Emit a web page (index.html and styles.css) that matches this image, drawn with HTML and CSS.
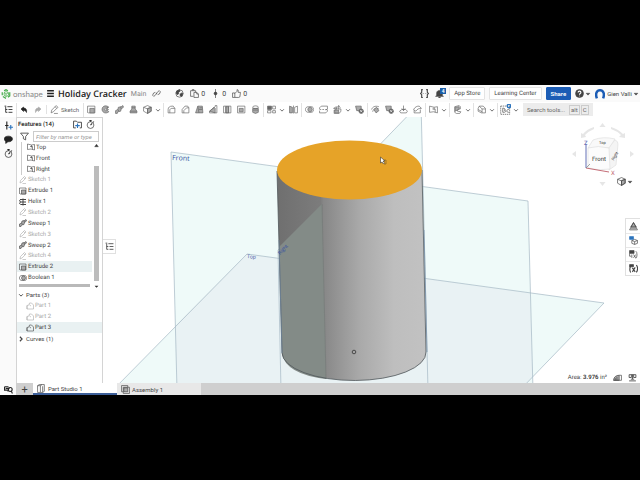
FILE: index.html
```html
<!DOCTYPE html>
<html lang="en">
<head>
  <meta charset="UTF-8">
  <meta name="viewport" content="width=device-width, initial-scale=1.0">
  <title>Holiday Cracker | Part Studio 1</title>
  <link rel="stylesheet" href="styles.css">
</head>
<body>
  <svg class="sprite" aria-hidden="true">
    <symbol id="i-logo" viewBox="0 0 16 16"><path d="M5 3l3-2 3 2M14 5v6l-3 2M8 15l-5-3M2 10V5" stroke-width="2"/><path d="M5 6l3-2 4 2v4l-4 2-3-2zM8 8v4M5 6l3 2 4-2"/></symbol>
    <symbol id="i-menu" viewBox="0 0 16 16"><path d="M2 3h12M2 8h12M2 13h12" stroke-width="2.500"/></symbol>
    <symbol id="i-link" viewBox="0 0 16 16"><path d="m7 9 3-4 3-2 2 2-2 4-3 1M9 7l-3 4-3 2-2-2 2-4 3-1"/></symbol>
    <symbol id="i-globe" viewBox="0 0 16 16"><circle cx="8" cy="8" r="6.500"/><path class="solid" d="M3 4l5-3 1 3-3 2 1 2-3 2-2-3zM9 9l3-2 2 1-2 5-3-1z"/></symbol>
    <symbol id="i-copy" viewBox="0 0 16 16"><path d="M6 13H1V3h9v3M4 3V1h3v2M7 6h5l3 3v6H7zM12 6v3h3"/></symbol>
    <symbol id="i-pin" viewBox="0 0 16 16"><path d="M8 0v16"/><circle class="solid" cx="8" cy="8" r="2.500"/></symbol>
    <symbol id="i-thumb" viewBox="0 0 16 16"><path d="M1 7h4v8H1zM5 8l4-4V1l2 1v4h4l-1 8-2 1H5"/></symbol>
    <symbol id="i-braces" viewBox="0 0 16 16"><path d="M5 1H3v5L1 8l2 2v5h2M11 1h2v5l2 2-2 2v5h-2M5 8h1M10 8h1" stroke-width="2"/></symbol>
    <symbol id="i-bell" viewBox="0 0 16 16"><path class="solid" d="M3 12V7c0-6 10-6 10 0v5l2 1H1zM6 14h4l-2 2z"/></symbol>
    <symbol id="i-help" viewBox="0 0 16 16"><circle class="solid" cx="8" cy="8" r="7"/><path d="M5.500 6c0-3 5-3 5 0 0 2-2.500 2-2.500 4M8 12v1" stroke="#fff" stroke-width="2"/></symbol>
    <symbol id="i-user" viewBox="0 0 16 16"><path d="M3 15C0 7 3 2 8 2s8 5 5 13" stroke-width="4"/></symbol>
    <symbol id="i-down" viewBox="0 0 16 16"><path d="m3 6 5 5 5-5" stroke-width="2.500"/></symbol>
    <symbol id="i-right" viewBox="0 0 16 16"><path d="m5 2 6 6-6 6" stroke-width="3"/></symbol>
    <symbol id="i-caret" viewBox="0 0 16 16"><path class="solid" d="M3 6h10l-5 5z"/></symbol>
    <symbol id="i-caret-up" viewBox="0 0 16 16"><path class="solid" d="M2 12h12L8 4z"/></symbol>
    <symbol id="i-tree" viewBox="0 0 16 16"><path d="M1 2h3M6 3h9M3 3v10h3M8 8h7M8 13h7M3 8h3" stroke-width="1.500"/></symbol>
    <symbol id="i-undo" viewBox="0 0 16 16"><path class="solid" d="m2 6 5-4v2c5 0 7 3 6 9-1-3-3-4-6-4v2z"/></symbol>
    <symbol id="i-redo" viewBox="0 0 16 16"><path class="solid" d="m14 6-5-4v2C4 4 2 7 3 13c1-3 3-4 6-4v2z"/></symbol>
    <symbol id="i-pencil" viewBox="0 0 16 16"><path d="m2 14 1-5 8-8 3 3-8 8zM9 3l3 3M7 15h7"/></symbol>
    <symbol id="i-extrude" viewBox="0 0 16 16"><path d="M1 14V2h13v3M2 14h12V5"/><path class="tone" d="M5 6h8v8H5z"/></symbol>
    <symbol id="i-revolve" viewBox="0 0 16 16"><path class="tone" d="M13 3C6-1 1 4 2 9s7 7 12 3l-3-3c-2 2-5 1-5-1s3-3 5-1z"/><path d="M8 8h6M10 5l4-1"/></symbol>
    <symbol id="i-sweep" viewBox="0 0 16 16"><path class="tone" d="M1 10l4-2 1-4 5-1 3-2 1 3-4 3-1 4-5 1-1 3H1z"/><path d="M5 8l2 3M10 3l1 4"/></symbol>
    <symbol id="i-loft" viewBox="0 0 16 16"><path class="tone" d="M5 2h6v5l3 4v3H2v-3l3-4z"/><path d="M5 5h6M2 11h12"/></symbol>
    <symbol id="i-box" viewBox="0 0 16 16"><path class="tone" d="m8 6 6-2v7l-6 4z"/><path d="m1 4 7-3 7 3v7l-7 4-7-4zM1 4l7 3 7-3M8 7v8"/></symbol>
    <symbol id="i-fillet" viewBox="0 0 16 16"><path d="M2 14V8c0-4 3-6 7-6h2l3 4v8zM5 14V9c0-2 2-3 4-3h5"/></symbol>
    <symbol id="i-chamfer" viewBox="0 0 16 16"><path d="M2 14V8l5-6h5l2 3v9zM5 14v-4l5-5h4"/></symbol>
    <symbol id="i-draft" viewBox="0 0 16 16"><path class="tone" d="M5 2h8l1 12H1z"/><path d="m5 2 2 12M8 5h5M7 8h6"/></symbol>
    <symbol id="i-rib" viewBox="0 0 16 16"><path class="tone" d="m1 11 8-7 2 2v8z"/><path d="M11 1h3v13H1v-3l10-8z"/></symbol>
    <symbol id="i-thicken" viewBox="0 0 16 16"><path class="tone" d="M5 3h5v11H5z"/><path d="M1 2h13v12H1zM5 2v12M10 2v12"/></symbol>
    <symbol id="i-shell" viewBox="0 0 16 16"><path d="M1 2h13v12H1z"/><path class="tone" d="M4 6h7v6H4z"/></symbol>
    <symbol id="i-hole" viewBox="0 0 16 16"><path class="tone" d="M3 6h10v7l-5 2-5-2z"/><ellipse cx="8" cy="4" rx="5" ry="2.500"/><path d="M3 9h10"/></symbol>
    <symbol id="i-pattern" viewBox="0 0 16 16"><path class="solid" d="M1 2h7v6H1z"/><path d="M10 2h5v5h-5zM1 10h6v4H1zM10 10h5v4h-5z"/></symbol>
    <symbol id="i-mirror" viewBox="0 0 16 16"><path d="M8 1v14M10 4l5-2v12h-5z"/><path class="tone" d="M1 2l5 2v10H1z"/></symbol>
    <symbol id="i-boolean" viewBox="0 0 16 16"><path d="M6 3h5c6 0 6 10 0 10H6C-1 13-1 3 6 3z"/><circle class="tone" cx="9" cy="8" r="4"/></symbol>
    <symbol id="i-split" viewBox="0 0 16 16"><path d="M1 7V5l3-3h11v5l-3 2M1 10v4h11l3-3V9M1 8h3M6 8h3M11 8h4"/></symbol>
    <symbol id="i-transform" viewBox="0 0 16 16"><path d="M1 6l5-3v5l-4 1v6h9l3-4V7h-4zM7 5l3-4 3 4M10 1v7"/><path class="tone" d="M3 9h7v5H3z"/></symbol>
    <symbol id="i-delete" viewBox="0 0 16 16"><path class="tone" d="M1 2h10v8H3z"/><circle class="solid" cx="11" cy="11" r="4"/><path d="m9 9 4 4M13 9l-4 4" stroke="#fff"/></symbol>
    <symbol id="i-moveface" viewBox="0 0 16 16"><path d="M1 8c2-5 6-7 13-5M3 12c1-5 5-7 11-5"/><path class="tone" d="m5 8 5-4 4 6-5 4z"/></symbol>
    <symbol id="i-replace" viewBox="0 0 16 16"><path d="M1 11l4-3h7l3 3-2 3H3zM8 1v9M5 6l3 4 3-4"/></symbol>
    <symbol id="i-offset" viewBox="0 0 16 16"><path d="M1 8c3-5 6-6 10-6l4 4c-5 0-7 1-10 5zM2 9v5h11V8"/></symbol>
    <symbol id="i-plane" viewBox="0 0 16 16"><path d="M1 2l8 2 6-1v11l-7-2-7 1zM9 4v5M6 7h5v6"/></symbol>
    <symbol id="i-helix" viewBox="0 0 16 16"><path d="M2 3h12M4 3c-4 1-4 4 0 5h10M4 8c-4 1-4 4 0 5h10M8 1v14" stroke-width="2"/></symbol>
    <symbol id="i-sheet" viewBox="0 0 16 16"><path d="M3 3l8-2 2 2v4l-5 1v3l6 1-2 3H6l-3-2z"/><path class="tone" d="M4 4l7-1v4L4 11z"/></symbol>
    <symbol id="i-frame" viewBox="0 0 16 16"><path d="M4 2h7l4 4v8H8L2 11V6zM4 2l5 5h6M9 7v7M2 8l7 4"/></symbol>
    <symbol id="i-bc" viewBox="0 0 16 16"><path d="M1 3h13v12H1z" stroke-dasharray="2 1"/><path d="M4 6v6h2c3 0 3-3 0-3 2 0 2-3-2-3M13 8c-4-1-4 5 0 4"/><circle cx="13" cy="3" r="2.500" stroke="#2c74bd" stroke-width="2"/></symbol>
    <symbol id="i-insert" viewBox="0 0 16 16"><path d="M5 1v14M2 8h6" stroke-width="2"/><path d="M8 11h8M12 7v8" stroke="#2c74bd" stroke-width="2"/></symbol>
    <symbol id="i-chat" viewBox="0 0 16 16"><path class="solid" d="M8 2c10 0 9 11-1 10l-4 3v-4C-2 8 0 2 8 2z"/></symbol>
    <symbol id="i-clock" viewBox="0 0 16 16"><circle cx="8" cy="9" r="6"/><path d="M6 1h4M8 1v2M8 9l3-3M13 3l1 1" stroke-width="2"/></symbol>
    <symbol id="i-folder" viewBox="0 0 16 16"><path d="M5 14H1V2h5l2 2h7v10h-3" stroke-width="1.500"/><path d="M8 6v8M4 10h8" stroke="#2c74bd" stroke-width="2"/></symbol>
    <symbol id="i-filter" viewBox="0 0 16 16"><path d="M1 2h14L10 8v6l-4-2V8z" stroke-width="1.500"/></symbol>
    <symbol id="i-part" viewBox="0 0 16 16"><path d="M2 7l4-1 1-4h4l4 4v8H2zM2 7v7M7 6l3 2"/></symbol>
    <symbol id="i-studio" viewBox="0 0 16 16"><path d="M1 3h5v12H1zM6 3l3-2h4v12l-3 2H6M10 4v11M1 3l3-2h5"/></symbol>
    <symbol id="i-assembly" viewBox="0 0 16 16"><path class="tone" d="M5 5h7v7H5z"/><path d="M1 1h11v3M1 1v11h3M4 4h11v11H4z"/></symbol>
    <symbol id="i-search" viewBox="0 0 16 16"><path d="M1 3h7M1 3v6h5" stroke-width="2"/><circle cx="11" cy="8" r="3.500" stroke-width="2"/><path d="m13 11 2 4M3 6h6l-3 5" stroke-width="2"/></symbol>
    <symbol id="i-appearance" viewBox="0 0 16 16"><path class="tone" d="M8 1l5 8H3z"/><path d="M8 1l7 13H1zM4 9h8M3 12h10"/></symbol>
    <symbol id="i-config" viewBox="0 0 16 16"><path d="m5 8 5-2 5 2v5l-5 2-5-2zM5 8l5 2 5-2M10 10v5"/><path d="M1 1h7v5H1z" fill="#2c74bd" stroke="#2c74bd"/></symbol>
    <symbol id="i-table" viewBox="0 0 16 16"><path class="solid" d="M1 1h8v5H1z"/><path d="M1 6v5h3M5 8v6M8 8l4 6M12 8l-4 6M12 2c3 1 3 12 0 13"/></symbol>
    <symbol id="i-variable" viewBox="0 0 16 16"><path class="solid" d="M1 1h7v4H1z"/><path d="M3 4c-2 2-2 8 0 11M13 2c3 3 3 9 0 13M6 7l5 7M11 6l-5 8" stroke-width="2"/></symbol>
    <symbol id="i-measure" viewBox="0 0 16 16"><path class="tone" d="M1 13c0-6 5-9 10-9v9z"/><path d="M11 4h4v9H1M4 13V9M7 13V7"/></symbol>
    <symbol id="i-scale" viewBox="0 0 16 16"><path d="M2 14h12M5 11h6M8 3v8M2 3h12M2 3v5h4V3M10 3v5h4V3" stroke-width="1.500"/></symbol>
  </svg>

  <div class="stage">
    <div class="app">
      <header class="topbar">
        <a class="brand" href="#"><svg class="icon logo"><use href="#i-logo"/></svg>onshape</a>
        <button class="tool dark" aria-label="Menu"><svg class="icon"><use href="#i-menu"/></svg></button>
        <h1 class="title">Holiday Cracker</h1>
        <span class="branch">Main</span>
        <button class="tool" aria-label="Link"><svg class="icon"><use href="#i-link"/></svg></button>
        <div class="stats">
          <button class="stat" aria-label="Public"><svg class="icon"><use href="#i-globe"/></svg></button>
          <button class="stat"><svg class="icon"><use href="#i-copy"/></svg>0</button>
          <button class="stat"><svg class="icon"><use href="#i-pin"/></svg>0</button>
          <button class="stat"><svg class="icon"><use href="#i-thumb"/></svg>0</button>
        </div>
        <div class="account">
          <button class="tool" aria-label="Code"><svg class="icon"><use href="#i-braces"/></svg></button>
          <button class="tool bell" aria-label="Notifications"><svg class="icon"><use href="#i-bell"/></svg><span class="badge">4</span></button>
          <a class="btn" href="#">App Store</a>
          <a class="btn" href="#">Learning Center</a>
          <button class="btn share">Share</button>
          <button class="help" aria-label="Help"><svg class="icon"><use href="#i-help"/></svg><svg class="arrow"><use href="#i-caret"/></svg></button>
          <button class="user"><svg class="icon avatar"><use href="#i-user"/></svg>Gien Valli<svg class="arrow"><use href="#i-caret"/></svg></button>
        </div>
      </header>

      <div class="toolbar">
        <button class="tool rail-tool" aria-label="Feature list"><svg class="icon"><use href="#i-tree"/></svg></button>
        <div class="group">
          <button class="tool dark" aria-label="Undo"><svg class="icon small-icon"><use href="#i-undo"/></svg></button>
          <button class="tool faded" aria-label="Redo"><svg class="icon small-icon"><use href="#i-redo"/></svg></button>
        </div>
        <div class="group">
          <button class="sketch"><svg class="icon"><use href="#i-pencil"/></svg>Sketch</button>
        </div>
        <div class="group">
          <button class="tool" aria-label="Extrude"><svg class="icon"><use href="#i-extrude"/></svg></button>
          <button class="tool" aria-label="Revolve"><svg class="icon"><use href="#i-revolve"/></svg></button>
          <button class="tool" aria-label="Sweep"><svg class="icon"><use href="#i-sweep"/></svg></button>
          <button class="tool" aria-label="Loft"><svg class="icon"><use href="#i-loft"/></svg></button>
          <button class="tool" aria-label="Thicken"><svg class="icon"><use href="#i-box"/></svg></button>
          <button class="more" aria-label="More solids"><svg class="arrow"><use href="#i-down"/></svg></button>
        </div>
        <div class="group">
          <button class="tool" aria-label="Fillet"><svg class="icon"><use href="#i-fillet"/></svg></button>
          <button class="tool" aria-label="Chamfer"><svg class="icon"><use href="#i-chamfer"/></svg></button>
          <button class="tool" aria-label="Draft"><svg class="icon"><use href="#i-draft"/></svg></button>
          <button class="tool" aria-label="Rib"><svg class="icon"><use href="#i-rib"/></svg></button>
          <button class="tool" aria-label="Wall"><svg class="icon"><use href="#i-thicken"/></svg></button>
          <button class="tool" aria-label="Shell"><svg class="icon"><use href="#i-shell"/></svg></button>
          <button class="tool" aria-label="Hole"><svg class="icon"><use href="#i-hole"/></svg></button>
        </div>
        <div class="group">
          <button class="tool" aria-label="Pattern"><svg class="icon"><use href="#i-pattern"/></svg></button>
          <button class="more" aria-label="More patterns"><svg class="arrow"><use href="#i-down"/></svg></button>
          <button class="tool" aria-label="Mirror"><svg class="icon"><use href="#i-mirror"/></svg></button>
        </div>
        <div class="group">
          <button class="tool" aria-label="Boolean"><svg class="icon"><use href="#i-boolean"/></svg></button>
          <button class="tool" aria-label="Split"><svg class="icon"><use href="#i-split"/></svg></button>
          <button class="tool" aria-label="Transform"><svg class="icon"><use href="#i-transform"/></svg></button>
          <button class="more" aria-label="More transforms"><svg class="arrow"><use href="#i-down"/></svg></button>
          <button class="tool" aria-label="Delete part"><svg class="icon"><use href="#i-delete"/></svg></button>
        </div>
        <div class="group">
          <button class="tool" aria-label="Move face"><svg class="icon"><use href="#i-moveface"/></svg></button>
          <button class="tool" aria-label="Delete face"><svg class="icon"><use href="#i-delete"/></svg></button>
          <button class="tool" aria-label="Replace face"><svg class="icon"><use href="#i-replace"/></svg></button>
          <button class="tool" aria-label="Offset surface"><svg class="icon"><use href="#i-offset"/></svg></button>
        </div>
        <div class="group">
          <button class="tool" aria-label="Plane"><svg class="icon"><use href="#i-plane"/></svg></button>
          <button class="more" aria-label="More planes"><svg class="arrow"><use href="#i-down"/></svg></button>
        </div>
        <div class="group">
          <button class="tool" aria-label="Sheet metal"><svg class="icon"><use href="#i-sheet"/></svg></button>
          <button class="more" aria-label="More sheet metal"><svg class="arrow"><use href="#i-down"/></svg></button>
        </div>
        <div class="group">
          <button class="tool" aria-label="Frame"><svg class="icon"><use href="#i-frame"/></svg></button>
          <button class="more" aria-label="More frames"><svg class="arrow"><use href="#i-down"/></svg></button>
        </div>
        <div class="group">
          <button class="tool" aria-label="Custom features"><svg class="icon large"><use href="#i-bc"/></svg></button>
          <button class="more" aria-label="More custom features"><svg class="arrow"><use href="#i-down"/></svg></button>
        </div>
        <button class="search">Search tools... <span class="keys"><kbd>alt</kbd><kbd>C</kbd></span></button>
      </div>

      <div class="workspace">
        <nav class="rail">
          <button class="tool" aria-label="Insert"><svg class="icon"><use href="#i-insert"/></svg></button>
          <button class="tool" aria-label="Comments"><svg class="icon"><use href="#i-chat"/></svg></button>
          <button class="tool" aria-label="History"><svg class="icon"><use href="#i-clock"/></svg></button>
        </nav>

        <aside class="panel">
          <div class="panel-head">
            <h2>Features (14)</h2>
            <button class="tool" aria-label="Add folder"><svg class="icon"><use href="#i-folder"/></svg></button>
            <button class="tool" aria-label="Rebuild time"><svg class="icon"><use href="#i-clock"/></svg></button>
          </div>
          <div class="filter">
            <svg class="icon"><use href="#i-filter"/></svg>
            <input type="text" placeholder="Filter by name or type" aria-label="Filter features">
          </div>
          <div class="features">
            <ul class="list">
              <li class="child"><svg class="icon"><use href="#i-plane"/></svg>Top</li>
              <li class="child"><svg class="icon"><use href="#i-plane"/></svg>Front</li>
              <li class="child"><svg class="icon"><use href="#i-plane"/></svg>Right</li>
              <li class="hidden"><svg class="icon"><use href="#i-pencil"/></svg>Sketch 1</li>
              <li><svg class="icon"><use href="#i-extrude"/></svg>Extrude 1</li>
              <li><svg class="icon"><use href="#i-helix"/></svg>Helix 1</li>
              <li class="hidden"><svg class="icon"><use href="#i-pencil"/></svg>Sketch 2</li>
              <li><svg class="icon"><use href="#i-sweep"/></svg>Sweep 1</li>
              <li class="hidden"><svg class="icon"><use href="#i-pencil"/></svg>Sketch 3</li>
              <li><svg class="icon"><use href="#i-sweep"/></svg>Sweep 2</li>
              <li class="hidden"><svg class="icon"><use href="#i-pencil"/></svg>Sketch 4</li>
              <li class="selected"><svg class="icon"><use href="#i-extrude"/></svg>Extrude 2</li>
              <li><svg class="icon"><use href="#i-boolean"/></svg>Boolean 1</li>
            </ul>
            <div class="scrollbar">
              <svg class="arrow"><use href="#i-caret-up"/></svg>
              <div class="thumb"></div>
              <svg class="arrow"><use href="#i-caret"/></svg>
            </div>
            <div class="rollback"></div>
          </div>
          <div class="parts">
            <button class="section"><svg class="arrow"><use href="#i-down"/></svg>Parts (3)</button>
            <ul class="list">
              <li class="part hidden"><svg class="icon"><use href="#i-part"/></svg>Part 1</li>
              <li class="part hidden"><svg class="icon"><use href="#i-part"/></svg>Part 2</li>
              <li class="part selected"><svg class="icon"><use href="#i-part"/></svg>Part 3</li>
            </ul>
            <button class="section"><svg class="arrow"><use href="#i-right"/></svg>Curves (1)</button>
          </div>
        </aside>

        <main class="viewport">
          <svg class="model" viewBox="103 117 537 266" preserveAspectRatio="xMidYMid slice">
            <defs>
              <linearGradient id="side" gradientUnits="userSpaceOnUse" x1="277" y1="0" x2="427" y2="0">
                <stop offset="0" stop-color="#6f6f6f"/>
                <stop offset="0.290" stop-color="#7c7c7c"/>
                <stop offset="0.310" stop-color="#878787"/>
                <stop offset="0.550" stop-color="#a9a9a9"/>
                <stop offset="0.780" stop-color="#bebebe"/>
                <stop offset="1" stop-color="#c2c2c2"/>
              </linearGradient>
            </defs>
            <!-- reference planes, darker where two of them overlap -->
            <g fill="#effaf9">
              <path d="M171 152 528 201 533 390H177z"/>
              <path d="M247 254 604 303 520 390H113z"/>
              <path d="M278 250 421 102 428 390H281z"/>
            </g>
            <path d="M247 254 530 293 533 376 520 390H177L175 326z" fill="#e9f2f4"/>
            <g class="outlines">
              <path d="M171 152 528 201 533 390H177z"/>
              <path d="M247 254 604 303 520 390H113z"/>
              <path d="M278 250 421 102 428 390H281z"/>
            </g>
            <!-- cylinder -->
            <path d="M277 171 282 353A72 28 0 0 0 426 352L422 170z" fill="url(#side)"/>
            <path d="M279 247 322 204 326 379Q285 374 282 353z" fill="#838b87"/>
            <path d="M322 204 326 379" stroke="#747977" stroke-width=".6"/>
            <path d="M277 171 282 353A72 28 0 0 0 426 352L422 170" fill="none" stroke="#50585c" stroke-width=".8"/>
            <path d="M279 240 282 353M424 230 427 352" stroke="#7189a3" stroke-width=".7"/>
            <ellipse cx="349.500" cy="170" rx="72.500" ry="29.500" fill="#e6a328"/>
            <circle cx="354" cy="352" r="1.800" fill="none" stroke="#333" stroke-width=".8"/>
            <text class="plane-name" x="172" y="160" transform="rotate(3 172 160)">Front</text>
            <text class="plane-name small" x="247" y="258" transform="rotate(5 247 258)">Top</text>
            <text class="plane-name small" x="280" y="255" transform="rotate(-46 280 255)">Right</text>
            <path d="M380.500 157v6l1.500-1 1.500 2 1-1-1.500-2h2z" fill="#fff" stroke="#333" stroke-width=".6"/>
            <path d="M384 160h2v4h-2" fill="none" stroke="#7a5a20" stroke-width=".6"/>
          </svg>

          <button class="toggle" aria-label="Collapse list"><svg class="icon"><use href="#i-tree"/></svg></button>

          <svg class="cube" viewBox="570 120 66 70">
            <g fill="#e6e6e6">
              <path d="M602.500 123l3 4h-6zM572 154l4-3v6zM634 154l-4-3v6zM602.500 186l3-4h-6z"/>
              <path d="M594 127q-7 2-11 7l-2-1v5l5-1-1-2q4-4 9-6zM611 127q7 2 12 7l2-1v5l-6-1 2-2q-4-4-10-6z"/>
            </g>
            <g fill="#f4f4f4" stroke="#e0e0e0" stroke-width=".7" stroke-linejoin="round">
              <path d="M608 148l7-8q3 1 3 4l-2 21-7 5z"/>
              <path d="M588 148l5-8q10-4 22-1l-6 9z" fill="#f9f9f9"/>
              <path d="M588 148q10-3 21 0l1 21q-12 2-22-1z" fill="#fcfcfc"/>
            </g>
            <path d="M586 168V144" stroke="#5460ae" stroke-width=".9"/>
            <path d="M586 168 609 172" stroke="#bd5d69" stroke-width=".9"/>
            <path d="M586 168l4-4" stroke="#778888" stroke-width=".7"/>
            <text x="592" y="161" font-size="6">Front</text>
            <text x="599" y="144" font-size="4">Top</text>
            <text x="611" y="160" font-size="4" transform="rotate(-60 613 158)">Right</text>
            <text x="584" y="145" font-size="6" fill="#5460ae">Z</text>
            <text x="611" y="175" font-size="6" fill="#bd5d69">X</text>
          </svg>
          <button class="shading" aria-label="Shading"><svg class="icon"><use href="#i-box"/></svg><svg class="arrow"><use href="#i-caret"/></svg></button>

          <div class="side-tools">
            <button class="tool" aria-label="Appearance"><svg class="icon"><use href="#i-appearance"/></svg></button>
            <button class="tool" aria-label="Configurations"><svg class="icon"><use href="#i-config"/></svg></button>
            <button class="tool" aria-label="Custom tables"><svg class="icon"><use href="#i-table"/></svg></button>
            <button class="tool" aria-label="Variables"><svg class="icon"><use href="#i-variable"/></svg></button>
          </div>

          <div class="measure">
            <span>Area: <b>3.976</b> in²</span>
            <svg class="icon"><use href="#i-measure"/></svg>
            <svg class="icon"><use href="#i-scale"/></svg>
          </div>
        </main>
      </div>

      <footer class="tabs">
        <button class="tool rail-tool" aria-label="Tab manager"><svg class="icon"><use href="#i-search"/></svg></button>
        <button class="add" aria-label="Add tab">+</button>
        <button class="tab active"><svg class="icon"><use href="#i-studio"/></svg>Part Studio 1</button>
        <button class="tab"><svg class="icon"><use href="#i-assembly"/></svg>Assembly 1</button>
      </footer>
    </div>
  </div>
</body>
</html>
```

FILE: styles.css
```css
* {
  box-sizing: border-box;
}
body {
  margin: 0;
  background-color: #000;
  color: #444;
  font-family: Roboto, sans-serif;
  font-size: 6px;
  text-rendering: geometricPrecision;
}
button {
  display: flex;
  align-items: center;
  margin: 0;
  padding: 0;
  border: none;
  background: none;
  color: inherit;
  font: inherit;
  white-space: nowrap;
  cursor: pointer;
}
a {
  color: inherit;
  text-decoration: none;
}
h1, h2, ul {
  margin: 0;
  padding: 0;
}
.sprite {
  position: absolute;
  width: 0;
  height: 0;
}
.icon {
  flex: none;
  width: 9px;
  height: 9px;
}
.icon.large {
  width: 11px;
  height: 11px;
}
.icon.small-icon {
  width: 8px;
  height: 8px;
}
.arrow {
  flex: none;
  width: 6px;
  height: 6px;
}
.icon, .arrow {
  fill: none;
  stroke: currentColor;
  stroke-width: 1.2;
}
.solid {
  fill: currentColor;
}
.tone {
  fill: #aaa;
}

/* black bars above and below the app */
.stage {
  display: flex;
  flex-direction: column;
  min-height: 100vh;
  padding: 85px 0;
}
.app {
  display: flex;
  flex: 1;
  flex-direction: column;
  background-color: #fff;
}

/* top bar */
.topbar {
  display: flex;
  align-items: center;
  height: 17px;
  padding: 0 1px;
  background-color: #fafafa;
}
.brand {
  display: flex;
  align-items: center;
  gap: 2px;
  width: 42px;
  color: #888;
  font-family: Lato, sans-serif;
  font-size: 8px;
}
.logo {
  width: 10px;
  height: 10px;
  color: #4caf50;
}
.tool {
  justify-content: center;
  width: 14px;
  height: 14px;
}
.title {
  margin-left: 1px;
  color: #222;
  font-family: 'Open Sans', sans-serif;
  font-size: 9px;
  font-weight: 600;
  white-space: nowrap;
}
.branch {
  margin: 0 3px 0 4px;
  color: #888;
  font-size: 7px;
}
.stats {
  display: flex;
  gap: 6px;
  margin-left: 12px;
}
.stat {
  gap: 2px;
  font-size: 7px;
}
.account {
  display: flex;
  align-items: center;
  gap: 4px;
  margin-left: auto;
}
.account .tool {
  width: 11px;
}
.bell {
  position: relative;
}
.badge {
  position: absolute;
  top: 1px;
  right: -1px;
  width: 6px;
  height: 6px;
  background-color: #1b5faa;
  color: #fff;
  font-size: 5px;
  font-weight: bold;
  line-height: 6px;
  text-align: center;
}
.btn {
  height: 13px;
  padding: 0 4px;
  border: 1px solid #e4e4e4;
  border-radius: 1px;
  background-color: #fff;
  line-height: 11px;
  white-space: nowrap;
}
.share {
  border-color: #1b5cb5;
  background-color: #1b5cb5;
  color: #fff;
  font-weight: 600;
}
.help, .user {
  gap: 1px;
}
.avatar {
  width: 10px;
  height: 10px;
  margin-right: 1px;
  color: #1b5cb5;
}

/* toolbar */
.toolbar {
  display: flex;
  align-items: center;
  height: 15px;
  color: #666;
}
.rail-tool {
  width: 16px;
  color: #222;
}
.group {
  display: flex;
  align-items: center;
  padding-right: 1px;
  border-left: 1px solid #e2e2e2;
}
.dark {
  color: #222;
}
.faded {
  color: #aaa;
}
.sketch {
  gap: 2px;
  width: 35px;
  padding-left: 3px;
}
.more {
  justify-content: center;
  width: 8px;
}
.search {
  gap: 4px;
  height: 13px;
  margin-left: 2px;
  padding: 0 4px;
  background-color: #ececec;
  color: #666;
}
.keys {
  display: flex;
  gap: 1px;
}
kbd {
  padding: 0 1px;
  border: 1px solid #ccc;
  font: inherit;
  line-height: 8px;
}

/* workspace */
.workspace {
  display: flex;
  flex: 1;
}
.rail {
  width: 16px;
  padding: 1px;
  background-color: #fafafa;
  color: #222;
}
.panel {
  width: 87px;
  border: 1px solid #d4d4d4;
  border-bottom: none;
}
.panel-head {
  display: flex;
  align-items: center;
  height: 13px;
  padding-right: 5px;
}
h2 {
  margin-right: auto;
  padding-left: 1px;
  color: #333;
  font-size: 6px;
  font-weight: 600;
}
.panel-head .tool {
  width: 13px;
  color: #333;
}
.filter {
  display: flex;
  align-items: center;
  gap: 4px;
  padding: 0 3px;
}
.filter input {
  flex: 1;
  min-width: 0;
  height: 11px;
  padding: 0 2px;
  border: 1px solid #ccc;
  font: italic 6px Roboto, sans-serif;
}
.filter input::placeholder {
  color: #999;
}
.features {
  display: grid;
  grid-template-columns: 1fr 10px;
  grid-template-rows: 1fr auto;
  height: 147px;
}
.list {
  display: flex;
  flex-direction: column;
  list-style: none;
}
.list li {
  display: flex;
  flex: 1;
  align-items: center;
  gap: 1px;
  min-height: 10px;
  padding-left: 2px;
  white-space: nowrap;
}
.list .icon {
  width: 8px;
  height: 8px;
}
.list .child {
  margin-left: 4px;
  padding-left: 5px;
  border-left: 1px solid #ccc;
}
.list .part {
  min-height: 11px;
  padding-left: 9px;
}
.list .hidden {
  color: #aaa;
}
.list .selected {
  background-color: #e9f1f2;
}
.scrollbar {
  display: flex;
  flex-direction: column;
  grid-row: span 2;
  align-items: center;
  padding: 1px 2px 0 0;
  color: #333;
}
.thumb {
  flex: 1;
  width: 5px;
  margin: 18px 0 3px;
  background-color: #bcbcbc;
}
.scrollbar .arrow {
  width: 5px;
  height: 5px;
}
.rollback {
  height: 3px;
  margin: 1px 2px 2px;
  background-color: #b9b9b9;
}
.section {
  gap: 2px;
  height: 11px;
  padding-left: 1px;
}

/* 3d view */
.viewport {
  position: relative;
  flex: 1;
  min-width: 0;
  overflow: hidden;
}
.model {
  position: absolute;
  width: 100%;
  height: 100%;
}
.outlines {
  fill: none;
  stroke: #a5b8c4;
  stroke-width: 0.7;
}
.plane-name {
  fill: #3550a0;
  font-family: 'Open Sans', sans-serif;
  font-size: 7px;
}
.plane-name.small {
  font-size: 5px;
}
.toggle {
  position: absolute;
  top: 122px;
  left: 0;
  justify-content: center;
  width: 13px;
  height: 15px;
  border: 1px solid #e0e0e0;
  border-left: none;
  background-color: #fff;
}
.cube {
  position: absolute;
  top: 3px;
  right: 4px;
  width: 66px;
  height: 70px;
  fill: #333;
}
.shading {
  position: absolute;
  top: 60px;
  right: 7px;
  gap: 1px;
}
.side-tools {
  position: absolute;
  top: 101px;
  right: 0;
  border: 1px solid #e0e0e0;
  border-right: none;
  background-color: #fff;
}
.side-tools .tool + .tool {
  border-top: 1px solid #e8e8e8;
}
.measure {
  position: absolute;
  right: 3px;
  bottom: 1px;
  display: flex;
  align-items: center;
  gap: 6px;
}

/* document tabs */
.tabs {
  display: flex;
  height: 12px;
  background-color: #cfcfcf;
}
.tabs .rail-tool {
  height: 12px;
  background-color: #fafafa;
}
.add {
  justify-content: center;
  width: 17px;
  background-color: #cfcfcf;
  font-size: 11px;
}
.tab {
  gap: 2px;
  width: 84px;
  padding-left: 4px;
  background-color: #e8e8e8;
}
.tab.active {
  border-bottom: 2px solid #3d5f99;
  background-color: #fff;
}
```
